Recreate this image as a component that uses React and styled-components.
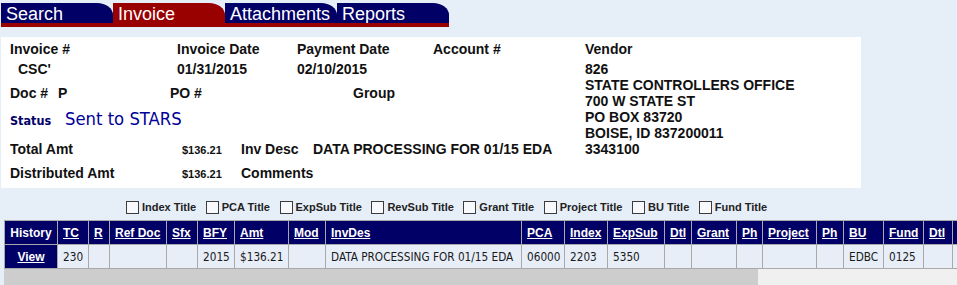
import React from 'react';
import styled, { createGlobalStyle } from 'styled-components';

const Global = createGlobalStyle`
  html, body { margin: 0; padding: 0; overflow: hidden; background: #e6eef8; }
  body { font-family: "Liberation Sans", Arial, sans-serif; }
`;

const Page = styled.div`
  width: 957px;
  height: 285px;
  overflow: hidden;
  padding-top: 3px;
  box-sizing: border-box;
`;

const TabStrip = styled.nav`
  margin-left: 1px;
  width: 448px;
  display: flex;
  flex-direction: column;
`;

const Tabs = styled.div`
  display: flex;
`;

const Tab = styled.a`
  width: 112px;
  height: 20px;
  box-sizing: border-box;
  padding-left: 5px;
  background: ${p => (p.$active ? '#990000' : '#000066')};
  color: #fff;
  font: 18px "Liberation Sans", Arial, sans-serif;
  line-height: 22px;
  text-decoration: none;
  white-space: nowrap;
  overflow: hidden;
  border-top-right-radius: 16px 12px;
`;

const TabBar = styled.div`
  height: 4px;
  background: #990000;
`;

const Panel = styled.section`
  margin: 10px 0 0 1px;
  width: 860px;
  height: 151px;
  box-sizing: border-box;
  padding: 4px 0 0 9px;
  background: #fff;
  display: flex;
  font: bold 14px "Liberation Sans", Arial, sans-serif;
  color: #111;
`;

const Left = styled.div`
  width: 575px;
  display: flex;
  flex-direction: column;
`;

const Row = styled.div`
  display: grid;
  grid-template-columns: ${p => p.$cols};
  margin-top: ${p => p.$space || 0}px;
  height: ${p => p.$lh || 16}px;
  line-height: ${p => p.$lh || 16}px;
  align-items: baseline;
  white-space: nowrap;
`;

const Cell = styled.span`
  padding-left: ${p => p.$indent || 0}px;
`;

const Small = styled.span`
  font-size: 11px;
`;

const StatusLabel = styled.span`
  font-family: "DejaVu Sans Condensed", "DejaVu Sans", sans-serif;
  font-stretch: condensed;
  font-weight: bold;
  font-size: 12.5px;
  color: #000066;
`;

const StatusValue = styled.span`
  font-family: "DejaVu Sans Condensed", "DejaVu Sans", sans-serif;
  font-stretch: condensed;
  font-weight: normal;
  font-size: 18.3px;
  color: #000099;
`;

const Vendor = styled.div`
  display: flex;
  flex-direction: column;
  line-height: 16px;
  white-space: nowrap;
`;

const VendorLines = styled.div`
  margin-top: 4px;
  display: flex;
  flex-direction: column;
`;

const CheckRow = styled.div`
  height: 32px;
  box-sizing: border-box;
  padding: 6px 0 0 126px;
  display: flex;
  align-items: center;
  font: bold 11px "Liberation Sans", Arial, sans-serif;
  color: #222;
`;

const CheckItem = styled.label`
  display: flex;
  align-items: center;
  margin-right: 9.5px;
  white-space: nowrap;
`;

const Box = styled.input`
  appearance: none;
  margin: 0 3px 0 0;
  width: 13px;
  height: 13px;
  box-sizing: border-box;
  border: 1px solid #3c3c3c;
  background: #f7f9fc;
`;

const TableArea = styled.div`
  margin-left: 4px;
  display: flex;
  flex-direction: column;
`;

const TableClip = styled.div`
  overflow: hidden;
`;

const ScrollTrack = styled.div`
  height: 17px;
  background: #f0f0f0;
  display: flex;
`;

const ScrollThumb = styled.div`
  height: 100%;
  background: #cdcdcd;
`;

const Grid = styled.table`
  border-collapse: collapse;
  table-layout: fixed;
  width: ${p => p.$w}px;
`;

const Col = styled.col`
  width: ${p => p.$w}px;
`;

const Th = styled.th`
  height: 23px;
  padding: 0 5px;
  background: #000066;
  border: 1px solid #a9a9a9;
  text-align: ${p => (p.$center ? 'center' : 'left')};
  font: bold 12px "Liberation Sans", Arial, sans-serif;
  color: #fff;
  white-space: nowrap;
  overflow: hidden;
`;

const HeadLink = styled.a`
  color: #fff;
  text-decoration: underline;
`;

const Td = styled.td`
  height: 23px;
  padding: 0 5px;
  background: ${p => (p.$nav ? '#000066' : '#e8eef8')};
  border: 1px solid #a9a9a9;
  text-align: ${p => (p.$center ? 'center' : 'left')};
  font-family: "DejaVu Sans Condensed", "DejaVu Sans", sans-serif;
  font-stretch: condensed;
  font-size: 11.7px;
  color: #1a1a1a;
  white-space: nowrap;
  overflow: hidden;
`;

const ViewLink = styled.a`
  font: bold 12px "Liberation Sans", Arial, sans-serif;
  color: #fff;
  text-decoration: underline;
`;

const columns = [
  { id: 'hist', label: 'History', w: 53, center: true, plain: true },
  { id: 'tc', label: 'TC', w: 31 },
  { id: 'r', label: 'R', w: 21 },
  { id: 'ref', label: 'Ref Doc', w: 57 },
  { id: 'sfx', label: 'Sfx', w: 31 },
  { id: 'bfy', label: 'BFY', w: 37 },
  { id: 'amt', label: 'Amt', w: 54 },
  { id: 'mod', label: 'Mod', w: 37 },
  { id: 'invdes', label: 'InvDes', w: 196 },
  { id: 'pca', label: 'PCA', w: 43 },
  { id: 'index', label: 'Index', w: 43 },
  { id: 'expsub', label: 'ExpSub', w: 57 },
  { id: 'dtl1', label: 'Dtl', w: 27 },
  { id: 'grant', label: 'Grant', w: 45 },
  { id: 'ph1', label: 'Ph', w: 26 },
  { id: 'project', label: 'Project', w: 54 },
  { id: 'ph2', label: 'Ph', w: 27 },
  { id: 'bu', label: 'BU', w: 40 },
  { id: 'fund', label: 'Fund', w: 40 },
  { id: 'dtl2', label: 'Dtl', w: 29 },
  { id: 'contract', label: 'Contract', w: 70 },
  { id: 'agyobj', label: 'Agy Obj', w: 60 },
  { id: 'agysrc', label: 'Agy Src', w: 60 },
  { id: 'loc', label: 'Loc', w: 67 },
];

const TABLE_WIDTH = columns.reduce((s, c) => s + c.w, 0);
const VIEW_WIDTH = 953;

const line = {
  tc: '230', bfy: '2015', amt: '$136.21', invdes: 'DATA PROCESSING FOR 01/15 EDA',
  pca: '06000', index: '2203', expsub: '5350', bu: 'EDBC', fund: '0125',
};

const titles = ['Index Title', 'PCA Title', 'ExpSub Title', 'RevSub Title', 'Grant Title', 'Project Title', 'BU Title', 'Fund Title'];

const vendorLines = ['826', 'STATE CONTROLLERS OFFICE', '700 W STATE ST', 'PO BOX 83720', 'BOISE, ID 837200011', '3343100'];

export default function App() {
  const thumbWidth = (VIEW_WIDTH * VIEW_WIDTH) / TABLE_WIDTH;
  return (
    <Page>
      <Global />
      <TabStrip>
        <Tabs>
          <Tab href="#">Search</Tab>
          <Tab href="#" $active>Invoice</Tab>
          <Tab href="#">Attachments</Tab>
          <Tab href="#">Reports</Tab>
        </Tabs>
        <TabBar />
      </TabStrip>

      <Panel>
        <Left>
          <Row $cols="167px 120px 136px auto">
            <Cell>Invoice #</Cell>
            <Cell>Invoice Date</Cell>
            <Cell>Payment Date</Cell>
            <Cell>Account #</Cell>
          </Row>
          <Row $cols="167px 120px 136px auto" $space={4}>
            <Cell $indent={8}>CSC'</Cell>
            <Cell>01/31/2015</Cell>
            <Cell>02/10/2015</Cell>
            <Cell></Cell>
          </Row>
          <Row $cols="48px 112px 183px auto" $space={8}>
            <Cell>Doc #</Cell>
            <Cell>P</Cell>
            <Cell>PO #</Cell>
            <Cell>Group</Cell>
          </Row>
          <Row $cols="55px auto" $space={8} $lh={20}>
            <StatusLabel>Status</StatusLabel>
            <StatusValue>Sent to STARS</StatusValue>
          </Row>
          <Row $cols="172px 59px 72px auto" $space={12}>
            <Cell>Total Amt</Cell>
            <Small>$136.21</Small>
            <Cell>Inv Desc</Cell>
            <Cell>DATA PROCESSING FOR 01/15 EDA</Cell>
          </Row>
          <Row $cols="172px 59px 72px auto" $space={8}>
            <Cell>Distributed Amt</Cell>
            <Small>$136.21</Small>
            <Cell>Comments</Cell>
            <Cell></Cell>
          </Row>
        </Left>
        <Vendor>
          <span>Vendor</span>
          <VendorLines>
            {vendorLines.map(l => <span key={l}>{l}</span>)}
          </VendorLines>
        </Vendor>
      </Panel>

      <CheckRow>
        {titles.map(t => (
          <CheckItem key={t}>
            <Box type="checkbox" />
            {t}
          </CheckItem>
        ))}
      </CheckRow>

      <TableArea>
        <TableClip>
          <Grid $w={TABLE_WIDTH}>
            <colgroup>
              {columns.map(c => <Col key={c.id} $w={c.w} />)}
            </colgroup>
            <thead>
              <tr>
                {columns.map(c => (
                  <Th key={c.id} $center={c.center}>
                    {c.plain ? c.label : <HeadLink href="#">{c.label}</HeadLink>}
                  </Th>
                ))}
              </tr>
            </thead>
            <tbody>
              <tr>
                {columns.map(c =>
                  c.id === 'hist' ? (
                    <Td key={c.id} $nav $center><ViewLink href="#">View</ViewLink></Td>
                  ) : (
                    <Td key={c.id}>{line[c.id] || ''}</Td>
                  )
                )}
              </tr>
            </tbody>
          </Grid>
        </TableClip>
        <ScrollTrack>
          <ScrollThumb style={{ width: thumbWidth }} />
        </ScrollTrack>
      </TableArea>
    </Page>
  );
}
